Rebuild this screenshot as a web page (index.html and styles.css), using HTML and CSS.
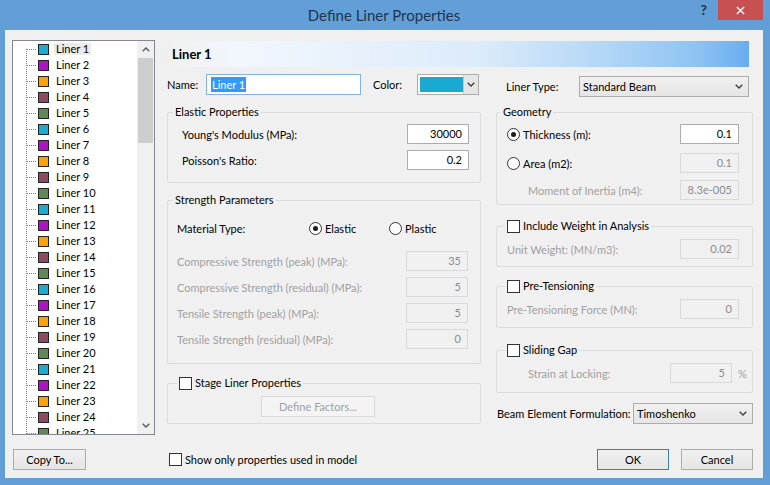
FILE: index.html
```html
<!DOCTYPE html>
<html lang="en">
<head>
  <meta charset="UTF-8">
  <title>Define Liner Properties</title>
  <link rel="stylesheet" href="styles.css">
</head>
<body>
  <div class="window">
    <div class="titlebar">
      <div class="title">Define Liner Properties</div>
      <div class="caption-buttons">
        <span class="help">?</span>
        <span class="close"><svg viewBox="0 0 10 10"><path d="M1 1L9 9M9 1L1 9"/></svg></span>
      </div>
    </div>
    <div class="client">
      <div class="listbox">
        <ul class="tree">
          <li class="sel"><span class="sw"></span><span class="txt">Liner 1</span></li>
          <li><span class="sw"></span><span class="txt">Liner 2</span></li>
          <li><span class="sw"></span><span class="txt">Liner 3</span></li>
          <li><span class="sw"></span><span class="txt">Liner 4</span></li>
          <li><span class="sw"></span><span class="txt">Liner 5</span></li>
          <li><span class="sw"></span><span class="txt">Liner 6</span></li>
          <li><span class="sw"></span><span class="txt">Liner 7</span></li>
          <li><span class="sw"></span><span class="txt">Liner 8</span></li>
          <li><span class="sw"></span><span class="txt">Liner 9</span></li>
          <li><span class="sw"></span><span class="txt">Liner 10</span></li>
          <li><span class="sw"></span><span class="txt">Liner 11</span></li>
          <li><span class="sw"></span><span class="txt">Liner 12</span></li>
          <li><span class="sw"></span><span class="txt">Liner 13</span></li>
          <li><span class="sw"></span><span class="txt">Liner 14</span></li>
          <li><span class="sw"></span><span class="txt">Liner 15</span></li>
          <li><span class="sw"></span><span class="txt">Liner 16</span></li>
          <li><span class="sw"></span><span class="txt">Liner 17</span></li>
          <li><span class="sw"></span><span class="txt">Liner 18</span></li>
          <li><span class="sw"></span><span class="txt">Liner 19</span></li>
          <li><span class="sw"></span><span class="txt">Liner 20</span></li>
          <li><span class="sw"></span><span class="txt">Liner 21</span></li>
          <li><span class="sw"></span><span class="txt">Liner 22</span></li>
          <li><span class="sw"></span><span class="txt">Liner 23</span></li>
          <li><span class="sw"></span><span class="txt">Liner 24</span></li>
          <li><span class="sw"></span><span class="txt">Liner 25</span></li>
        </ul>
        <div class="vscroll">
          <span class="sb-arrow"><svg viewBox="0 0 8 5"><path d="M0.7 4.3L4 1L7.3 4.3"/></svg></span>
          <span class="sb-thumb"></span>
          <span class="sb-track"></span>
          <span class="sb-arrow"><svg viewBox="0 0 8 5"><path d="M0.7 0.7L4 4L7.3 0.7"/></svg></span>
        </div>
      </div>

      <div class="main">
        <div class="header">Liner 1</div>
        <div class="columns">
          <!-- left column -->
          <div class="col">
            <div class="name-row">
              <span class="name-label">Name:</span>
              <span class="name-input"><span class="selected">Liner 1</span></span>
              <span class="color-label">Color:</span>
              <span class="color-combo">
                <span class="swatch"></span>
                <span class="drop"><svg class="chev" viewBox="0 0 8 5"><path d="M0.7 0.7L4 4L7.3 0.7"/></svg></span>
              </span>
            </div>

            <fieldset class="group elastic">
              <legend>Elastic Properties</legend>
              <div class="body">
                <div class="row"><span>Young's Modulus (MPa):</span><span class="field">30000</span></div>
                <div class="row"><span>Poisson's Ratio:</span><span class="field">0.2</span></div>
              </div>
            </fieldset>

            <fieldset class="group strength">
              <legend>Strength Parameters</legend>
              <div class="body">
                <div class="mat">
                  <span class="mat-label">Material Type:</span>
                  <span class="opt mat-opt"><span class="radio on"></span>Elastic</span>
                  <span class="opt"><span class="radio"></span>Plastic</span>
                </div>
                <div class="rows">
                  <div class="row off-text"><span>Compressive Strength (peak) (MPa):</span><span class="field off">35</span></div>
                  <div class="row off-text"><span>Compressive Strength (residual) (MPa):</span><span class="field off">5</span></div>
                  <div class="row off-text"><span>Tensile Strength (peak) (MPa):</span><span class="field off">5</span></div>
                  <div class="row off-text"><span>Tensile Strength (residual) (MPa):</span><span class="field off">0</span></div>
                </div>
              </div>
            </fieldset>

            <fieldset class="group stage">
              <legend><span class="opt"><span class="check"></span>Stage Liner Properties</span></legend>
              <div class="body">
                <button class="btn factors" disabled>Define Factors...</button>
              </div>
            </fieldset>
          </div>

          <!-- right column -->
          <div class="col">
            <div class="type-row">
              <span class="type-label">Liner Type:</span>
              <span class="select type-select">Standard Beam<svg class="chev" viewBox="0 0 8 5"><path d="M0.7 0.7L4 4L7.3 0.7"/></svg></span>
            </div>

            <fieldset class="group geometry">
              <legend>Geometry</legend>
              <div class="body">
                <div class="row"><span class="opt"><span class="radio on"></span>Thickness (m):</span><span class="field narrow">0.1</span></div>
                <div class="row area"><span class="opt"><span class="radio"></span>Area (m2):</span><span class="field narrow off">0.1</span></div>
                <div class="row inertia off-text"><span>Moment of Inertia (m4):</span><span class="field narrow off">8.3e-005</span></div>
              </div>
            </fieldset>

            <fieldset class="group weight">
              <legend><span class="opt"><span class="check"></span>Include Weight in Analysis</span></legend>
              <div class="body">
                <div class="row off-text"><span>Unit Weight: (MN/m3):</span><span class="field narrow off">0.02</span></div>
              </div>
            </fieldset>

            <fieldset class="group pretension">
              <legend><span class="opt"><span class="check"></span>Pre-Tensioning</span></legend>
              <div class="body">
                <div class="row off-text"><span>Pre-Tensioning Force (MN):</span><span class="field narrow off">0</span></div>
              </div>
            </fieldset>

            <fieldset class="group sliding">
              <legend><span class="opt"><span class="check"></span>Sliding Gap</span></legend>
              <div class="body">
                <div class="row off-text">
                  <span class="strain-label">Strain at Locking:</span>
                  <span class="field off">5</span>
                  <span class="unit">%</span>
                </div>
              </div>
            </fieldset>

            <div class="beam-row">
              <span class="beam-label">Beam Element Formulation:</span>
              <span class="select beam-select">Timoshenko<svg class="chev" viewBox="0 0 8 5"><path d="M0.7 0.7L4 4L7.3 0.7"/></svg></span>
            </div>
          </div>
        </div>
      </div>

      <button class="btn copy">Copy To...</button>
      <div class="footer">
        <span class="opt"><span class="check"></span>Show only properties used in model</span>
        <button class="btn ok">OK</button>
        <button class="btn cancel">Cancel</button>
      </div>
    </div>
  </div>
</body>
</html>
```

FILE: styles.css
```css
* { box-sizing: border-box; }
body {
  margin: 0;
  font-family: Lato, "Liberation Sans", sans-serif;
  font-size: 11px;
  color: #000;
}
.window {
  width: 770px;
  height: 485px;
  padding: 0 7px 7px 5px;
  background: #619fd6;
  display: flex;
  flex-direction: column;
}

/* caption bar */
.titlebar {
  height: 30px;
  flex: none;
  display: grid;
  grid-template-columns: 1fr auto 1fr;
}
.title { grid-column: 2; font-size: 15px; line-height: 30px; color: #1f3552; }
.caption-buttons { grid-column: 3; justify-self: end; display: flex; align-items: flex-start; }
.help { font-size: 14px; font-weight: bold; line-height: 20px; color: #1f3552; margin-right: 11px; }
.close {
  width: 45px;
  height: 20px;
  background: #c75050;
  display: flex;
  align-items: center;
  justify-content: center;
}
.close svg { width: 9px; height: 9px; stroke: #fff; stroke-width: 1.6; }

/* dialog body */
.client {
  flex: 1;
  background: #f0f0f0;
  display: grid;
  grid-template-columns: 143px 588px;
  grid-template-rows: 395px 21px;
  column-gap: 10px;
  row-gap: 14px;
  padding: 10px 10px 8px 7px;
}

/* tree list */
.listbox { border: 1px solid #828790; background: #fff; display: flex; overflow: hidden; }
.tree {
  flex: 1;
  margin: 0;
  padding: 0;
  list-style: none;
  background: repeating-linear-gradient(to bottom, #808080 0 1px, transparent 1px 2px) 13px 8px / 1px 100% no-repeat;
}
.tree li { height: 16px; display: flex; align-items: center; }
.tree li::before {
  content: "";
  width: 9px;
  height: 1px;
  margin-left: 14px;
  background: repeating-linear-gradient(to right, #808080 0 1px, transparent 1px 2px);
}
.sw { width: 11px; height: 11px; border: 1px solid #222; margin-left: 2px; flex: none; }
.txt { margin-left: 5px; padding: 0 2px; line-height: 12px; }
.sel .txt { background: #ebebeb; }
.tree li:nth-child(5n+1) .sw { background: #1aadd0; }
.tree li:nth-child(5n+2) .sw { background: #b014c8; }
.tree li:nth-child(5n+3) .sw { background: #ffa000; }
.tree li:nth-child(5n+4) .sw { background: #8e4c60; }
.tree li:nth-child(5n+5) .sw { background: #5c8a50; }

.vscroll { width: 17px; flex: none; background: #f0f0f0; display: flex; flex-direction: column; }
.sb-arrow { height: 17px; display: flex; align-items: center; justify-content: center; }
.sb-arrow svg { width: 8px; height: 5px; fill: none; stroke: #606060; stroke-width: 1.5; }
.sb-thumb { height: 85px; margin: 0 1px; background: #cdcdcd; }
.sb-track { flex: 1; }

/* right side */
.main { display: flex; flex-direction: column; }
.header {
  height: 26px;
  margin: 1px 4px 0 0;
  padding-left: 7px;
  line-height: 26px;
  font-size: 13px;
  font-weight: bold;
  background: linear-gradient(to right, #f0f0f0 0%, #f2f7fd 12%, #dcebfa 54%, #b5d8f7 74%, #8fc3f3 91%, #68adf0 100%);
}
.columns { display: grid; grid-template-columns: 314px 257px; column-gap: 15px; padding-left: 2px; }
.col { display: flex; flex-direction: column; }

.chev { width: 8px; height: 5px; fill: none; stroke: #404040; stroke-width: 1.4; flex: none; }

.name-row { margin-top: 7px; height: 21px; display: flex; align-items: center; }
.name-label { width: 39px; }
.name-input {
  width: 155px;
  height: 21px;
  border: 1px solid #7eb4ea;
  background: #fff;
  padding: 2px 0 0 4px;
}
.selected { display: inline-block; background: #3399ff; color: #fff; padding: 0 1px; line-height: 15px; }
.color-label { width: 44px; margin-left: 12px; }
.color-combo { width: 62px; height: 21px; border: 1px solid #acacac; background: #fff; display: flex; }
.swatch { width: 43px; margin: 2px 0 2px 2px; background: #1aa9d0; }
.drop {
  flex: 1;
  border-left: 1px solid #c8c8c8;
  background: #e5e5e5;
  display: flex;
  align-items: center;
  justify-content: center;
}

/* group boxes */
.group { margin: 0; padding: 0; border: 1px solid #dcdcdc; border-radius: 2px; min-width: 0; }
.group legend { height: 14px; line-height: 14px; padding: 0 2px; margin-left: 5px; }
.opt { display: inline-flex; align-items: center; gap: 3px; vertical-align: top; height: 14px; }
.check { width: 13px; height: 13px; border: 1px solid #333; background: #fff; flex: none; }
.radio {
  width: 13px;
  height: 13px;
  border: 1px solid #333;
  border-radius: 50%;
  background: #fff;
  flex: none;
  display: flex;
  align-items: center;
  justify-content: center;
}
.radio.on::after { content: ""; width: 5px; height: 5px; border-radius: 50%; background: #1a1a1a; }

.row { height: 20px; display: flex; align-items: center; justify-content: space-between; }
.field {
  width: 62px;
  height: 20px;
  border: 1px solid #abadb3;
  background: #fff;
  text-align: right;
  padding-right: 6px;
  line-height: 18px;
}
.field.narrow { width: 59px; }
.field.off { background: #f0f0f0; border-color: #d9d9d9; color: #8c8c8c; }
.off-text { color: #a0a0a0; }

.elastic { margin-top: 10px; }
.elastic .body { padding: 5px 11px 12px 14px; display: flex; flex-direction: column; gap: 6px; }

.strength { margin-top: 10px; }
.strength .body { padding: 13px 12px 14px 9px; }
.mat { height: 16px; display: flex; align-items: center; }
.mat-label { width: 132px; }
.mat-opt { width: 80px; }
.rows { margin-top: 15px; display: flex; flex-direction: column; gap: 6px; }

.stage { margin-top: 12px; }
.stage legend { margin-left: 9px; }
.stage .body { padding: 6px 0 6px 93px; }

.type-row { margin-top: 9px; height: 21px; display: flex; align-items: center; padding-left: 10px; }
.type-label { width: 73px; }
.select {
  height: 21px;
  border: 1px solid #acacac;
  background: linear-gradient(#f0f0f0, #e5e5e5);
  display: flex;
  align-items: center;
  justify-content: space-between;
  padding: 0 5px 0 3px;
}
.type-select { width: 170px; }

.geometry { margin-top: 8px; }
.geometry legend { margin-left: 4px; }
.geometry .body { padding: 5px 13px 4px 10px; }
.geometry .area { margin-top: 9px; }
.geometry .inertia { margin-top: 7px; padding-left: 21px; }

.weight, .pretension, .sliding { border-radius: 2px; }
.weight legend, .pretension legend, .sliding legend { margin-left: 8px; }
.weight { margin-top: 14px; }
.weight .body { padding: 6px 13px 7px 10px; }
.pretension { margin-top: 12px; }
.pretension .body { padding: 6px 13px 8px 10px; }
.sliding { margin-top: 15px; }
.sliding .body { padding: 6px 0 9px 10px; }
.strain-label { flex: 1; padding-left: 21px; }
.unit { width: 14px; margin-left: 6px; }

.beam-row { margin-top: 10px; height: 21px; display: flex; align-items: center; }
.beam-label { flex: 1; padding-left: 1px; }
.beam-select { width: 120px; }

/* buttons */
.btn {
  height: 21px;
  border: 1px solid #acacac;
  background: linear-gradient(#f0f0f0, #e5e5e5);
  font-family: inherit;
  font-size: 11px;
  color: #000;
  padding: 0;
}
.btn.factors { width: 114px; background: #f4f4f4; border-color: #d9d9d9; color: #a0a0a0; }
.btn.copy { width: 73px; margin-left: 1px; }
.footer { display: flex; align-items: center; padding-left: 4px; }
.btn.ok { width: 72px; margin-left: auto; border-color: #3c7fb1; }
.btn.cancel { width: 72px; margin-left: 12px; }
```
